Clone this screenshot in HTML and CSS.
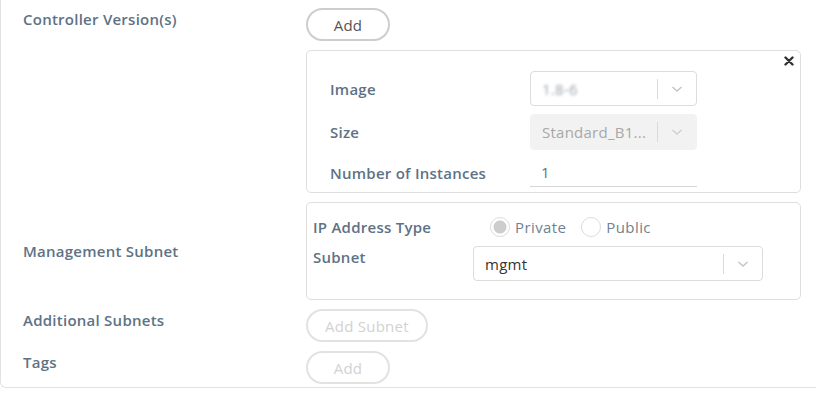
FILE: index.html
```html
<!DOCTYPE html>
<html lang="en">
<head>
    <meta charset="UTF-8">
    <meta name="viewport" content="width=device-width, initial-scale=1.0">
    <title>Controller Settings</title>
    <link rel="stylesheet" href="styles.css">
</head>
<body>

    <div class="panel">

        <!-- Controller versions -->
        <div class="form-row">
            <div class="row-label">Controller Version(s)</div>
            <div class="row-body">
                <button class="pill-btn">Add</button>

                <div class="sub-card version-card">
                    <span class="close-btn"><svg width="10" height="10" viewBox="0 0 10 10"><path d="M1.5 1.5 L8.5 8.5 M8.5 1.5 L1.5 8.5" stroke="#333" stroke-width="2.4" stroke-linecap="round"/></svg></span>
                    <div class="field">
                        <div class="field-label">Image</div>
                        <div class="select">
                            <span class="select-value blurred">1.8-6</span>
                            <span class="select-sep"></span>
                            <span class="select-arrow"><svg width="12" height="8" viewBox="0 0 12 8"><path d="M1.5 2 L6 6 L10.5 2" fill="none" stroke="#c4c4c4" stroke-width="1.4"/></svg></span>
                        </div>
                    </div>
                    <div class="field">
                        <div class="field-label">Size</div>
                        <div class="select disabled">
                            <span class="select-value">Standard_B1...</span>
                            <span class="select-sep"></span>
                            <span class="select-arrow"><svg width="12" height="8" viewBox="0 0 12 8"><path d="M1.5 2 L6 6 L10.5 2" fill="none" stroke="#cfcfcf" stroke-width="1.4"/></svg></span>
                        </div>
                    </div>
                    <div class="field">
                        <div class="field-label">Number of Instances</div>
                        <div class="text-input">1</div>
                    </div>
                </div>
            </div>
        </div>

        <!-- Management subnet -->
        <div class="form-row centered">
            <div class="row-label">Management Subnet</div>
            <div class="row-body">
                <div class="sub-card subnet-card">
                    <div class="subnet-field">
                        <div class="field-label ip-label">IP Address Type</div>
                        <div class="radio-group">
                            <label class="radio"><span class="radio-dot checked"></span>Private</label>
                            <label class="radio"><span class="radio-dot"></span>Public</label>
                        </div>
                    </div>
                    <div class="subnet-field top">
                        <div class="field-label subnet-label">Subnet</div>
                        <div class="select wide">
                            <span class="select-value dark">mgmt</span>
                            <span class="select-sep"></span>
                            <span class="select-arrow"><svg width="12" height="8" viewBox="0 0 12 8"><path d="M1.5 2 L6 6 L10.5 2" fill="none" stroke="#c4c4c4" stroke-width="1.4"/></svg></span>
                        </div>
                    </div>
                </div>
            </div>
        </div>

        <div class="form-row">
            <div class="row-label">Additional Subnets</div>
            <div class="row-body">
                <button class="pill-btn disabled">Add Subnet</button>
            </div>
        </div>

        <div class="form-row">
            <div class="row-label">Tags</div>
            <div class="row-body">
                <button class="pill-btn disabled">Add</button>
            </div>
        </div>

    </div>

</body>
</html>
```

FILE: styles.css
```css
body {
    font-family: 'Open Sans', 'Liberation Sans', sans-serif;
    background-color: #fff;
    margin: 0;
    padding: 0;
}

.panel {
    width: 830px;
    padding: 8px 0 3px 22px;
    border: 1px solid #e2e2e2;
    border-top: none;
    border-radius: 0 0 0 6px;
    display: flex;
    flex-direction: column;
    gap: 9px;
    box-sizing: border-box;
}

.form-row {
    display: grid;
    grid-template-columns: 283px 495px;
    align-items: start;
}

.form-row.centered {
    align-items: center;
}

.row-label {
    font-size: 15px;
    font-weight: 600;
    letter-spacing: 0.25px;
    color: #5e7285;
    line-height: 22px;
}

.row-body {
    display: flex;
    flex-direction: column;
    align-items: flex-start;
    gap: 9px;
}

.pill-btn {
    font-family: inherit;
    height: 33px;
    padding: 0 20px;
    min-width: 84px;
    background: #fff;
    border: 2px solid #cdcdcd;
    border-radius: 17px;
    font-size: 15px;
    letter-spacing: 0.25px;
    color: #555;
    cursor: pointer;
}

.pill-btn.disabled {
    padding: 0 17px;
    border-color: #e2e2e2;
    color: #d2d2d2;
}

.sub-card {
    position: relative;
    width: 495px;
    box-sizing: border-box;
    border: 1px solid #dedede;
    border-radius: 5px;
}

.version-card {
    height: 143px;
    padding: 20px 0 0 23px;
}

.close-btn {
    position: absolute;
    top: 5px;
    right: 6px;
    line-height: 0;
}

.field {
    display: flex;
    align-items: center;
    margin-bottom: 8px;
}

.field-label {
    width: 200px;
    font-size: 15px;
    font-weight: 600;
    letter-spacing: 0.25px;
    color: #5e7285;
}

.select {
    width: 167px;
    height: 35px;
    box-sizing: border-box;
    border: 1px solid #dcdcdc;
    border-radius: 4px;
    display: flex;
    align-items: center;
    padding-left: 11px;
}

.select.disabled {
    height: 36px;
    background-color: #f2f2f2;
    border-color: #f2f2f2;
}

.select.wide {
    width: 290px;
}

.select-value {
    flex: 1;
    font-size: 15px;
    letter-spacing: 0.25px;
    color: #a8a8a8;
    white-space: nowrap;
    overflow: hidden;
}

.select-value.blurred {
    color: #9aa3aa;
    filter: blur(1.5px);
}

.select-value.dark {
    color: #333;
}

.select-sep {
    width: 1px;
    height: 20px;
    background-color: #dadada;
}

.select-arrow {
    width: 38px;
    display: flex;
    justify-content: center;
}

.text-input {
    width: 167px;
    box-sizing: border-box;
    margin-top: 2px;
    padding: 2px 11px 4px;
    border-bottom: 1px solid #d6d6d6;
    font-size: 15px;
    color: #5e7285;
}

.subnet-card {
    height: 98px;
    padding: 14px 0 0 6px;
}

.subnet-field {
    display: flex;
    align-items: center;
    margin-bottom: 9px;
}

.subnet-field.top {
    align-items: flex-start;
}

.subnet-label {
    width: 160px;
    line-height: 22px;
}

.ip-label {
    width: 177px;
}

.radio-group {
    display: flex;
    gap: 15px;
}

.radio {
    display: flex;
    align-items: center;
    gap: 5px;
    font-size: 15px;
    letter-spacing: 0.4px;
    color: #6f8293;
}

.radio-dot {
    width: 20px;
    height: 20px;
    border: 1px solid #dcdcdc;
    border-radius: 50%;
    box-sizing: border-box;
    background: #fff;
}

.radio-dot.checked {
    background: radial-gradient(circle, #cdcdcd 0 6px, #fff 7px);
}
```
